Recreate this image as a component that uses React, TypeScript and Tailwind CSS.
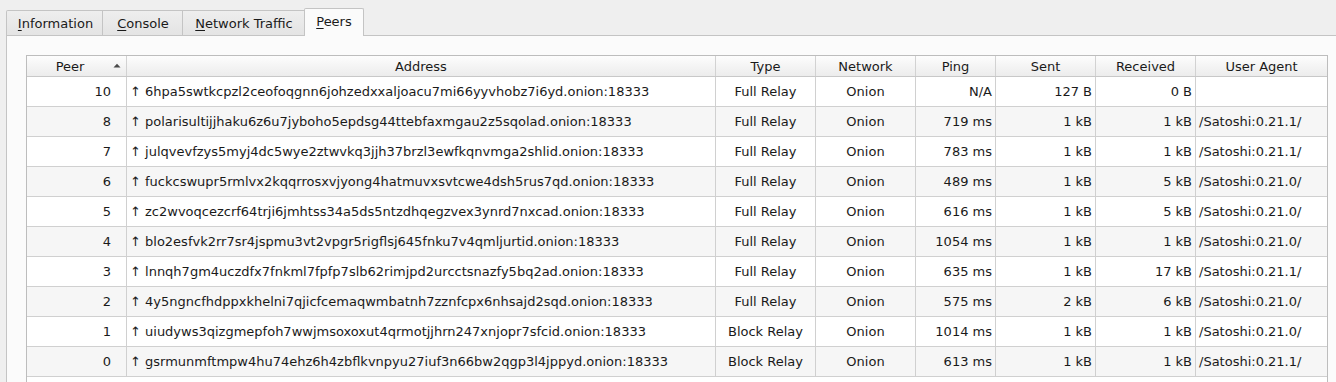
import React from "react";

type Row = {
  peer: string;
  addr: string;
  type: string;
  net: string;
  ping: string;
  sent: string;
  recv: string;
  ua: string;
};

const rows: Row[] = [
  { peer: "10", addr: "6hpa5swtkcpzl2ceofoqgnn6johzedxxaljoacu7mi66yyvhobz7i6yd.onion:18333", type: "Full Relay", net: "Onion", ping: "N/A", sent: "127 B", recv: "0 B", ua: "" },
  { peer: "8", addr: "polarisultijjhaku6z6u7jyboho5epdsg44ttebfaxmgau2z5sqolad.onion:18333", type: "Full Relay", net: "Onion", ping: "719 ms", sent: "1 kB", recv: "1 kB", ua: "/Satoshi:0.21.1/" },
  { peer: "7", addr: "julqvevfzys5myj4dc5wye2ztwvkq3jjh37brzl3ewfkqnvmga2shlid.onion:18333", type: "Full Relay", net: "Onion", ping: "783 ms", sent: "1 kB", recv: "1 kB", ua: "/Satoshi:0.21.1/" },
  { peer: "6", addr: "fuckcswupr5rmlvx2kqqrrosxvjyong4hatmuvxsvtcwe4dsh5rus7qd.onion:18333", type: "Full Relay", net: "Onion", ping: "489 ms", sent: "1 kB", recv: "5 kB", ua: "/Satoshi:0.21.0/" },
  { peer: "5", addr: "zc2wvoqcezcrf64trji6jmhtss34a5ds5ntzdhqegzvex3ynrd7nxcad.onion:18333", type: "Full Relay", net: "Onion", ping: "616 ms", sent: "1 kB", recv: "5 kB", ua: "/Satoshi:0.21.0/" },
  { peer: "4", addr: "blo2esfvk2rr7sr4jspmu3vt2vpgr5rigflsj645fnku7v4qmljurtid.onion:18333", type: "Full Relay", net: "Onion", ping: "1054 ms", sent: "1 kB", recv: "1 kB", ua: "/Satoshi:0.21.0/" },
  { peer: "3", addr: "lnnqh7gm4uczdfx7fnkml7fpfp7slb62rimjpd2urcctsnazfy5bq2ad.onion:18333", type: "Full Relay", net: "Onion", ping: "635 ms", sent: "1 kB", recv: "17 kB", ua: "/Satoshi:0.21.1/" },
  { peer: "2", addr: "4y5ngncfhdppxkhelni7qjicfcemaqwmbatnh7zznfcpx6nhsajd2sqd.onion:18333", type: "Full Relay", net: "Onion", ping: "575 ms", sent: "2 kB", recv: "6 kB", ua: "/Satoshi:0.21.0/" },
  { peer: "1", addr: "uiudyws3qizgmepfoh7wwjmsoxoxut4qrmotjjhrn247xnjopr7sfcid.onion:18333", type: "Block Relay", net: "Onion", ping: "1014 ms", sent: "1 kB", recv: "1 kB", ua: "/Satoshi:0.21.0/" },
  { peer: "0", addr: "gsrmunmftmpw4hu74ehz6h4zbflkvnpyu27iuf3n66bw2qgp3l4jppyd.onion:18333", type: "Block Relay", net: "Onion", ping: "613 ms", sent: "1 kB", recv: "1 kB", ua: "/Satoshi:0.21.1/" },
];

export default function App() {
  return (
    <div className="w-[1336px] h-[382px] overflow-hidden bg-[#efefef] text-[13px] leading-none text-[#1a1a1a] font-['DejaVu_Sans',sans-serif]">
      <div className="h-[35px] flex items-end pl-[6px]">
        <div className="w-[97px] h-[25px] flex items-center justify-center pl-[2px] border border-b-0 border-[#c4c4c4] rounded-tl-[2px] bg-gradient-to-b from-[#eeeeee] to-[#e4e4e4]">
          <span>
            <span className="underline underline-offset-[2px]">I</span>nformation
          </span>
        </div>
        <div className="w-[80px] h-[25px] flex items-center justify-center pl-[1px] border border-b-0 border-l-0 border-[#c4c4c4] bg-gradient-to-b from-[#eeeeee] to-[#e4e4e4]">
          <span>
            <span className="underline underline-offset-[2px]">C</span>onsole
          </span>
        </div>
        <div className="w-[122px] h-[25px] flex items-center justify-center pl-[1px] border border-b-0 border-l-0 border-[#c4c4c4] bg-gradient-to-b from-[#eeeeee] to-[#e4e4e4]">
          <span>
            <span className="underline underline-offset-[2px]">N</span>etwork Traffic
          </span>
        </div>
        <div className="relative z-10 -mb-px -ml-px w-[60px] h-[28px] flex items-center justify-center border border-b-0 border-[#c4c4c4] rounded-t-[2px] bg-[#fbfbfb]">
          <span className="-mt-[2px]">
            <span className="underline underline-offset-[2px]">P</span>eers
          </span>
        </div>
      </div>
      <div className="ml-[6px] h-[347px] border-l border-t border-[#c4c4c4] bg-[#fbfbfb] pt-[19px] pl-[19px]">
        <div className="w-[1302px] h-[400px] border border-[#bdbdbd] bg-white">
          <div className="flex h-[21px] border-b border-[#c8c8c8] bg-gradient-to-b from-[#fdfdfd] to-[#ececec]">
            <div className="relative w-[100px] shrink-0 flex items-center justify-center pr-[13px] border-r border-[#d2d2d2]">
              Peer
              <svg className="absolute left-[86px] top-[7px]" width="8" height="5" viewBox="0 0 8 5">
                <path d="M0.5 4.5 L4 0.8 L7.5 4.5 Z" fill="#4a4a4a" />
              </svg>
            </div>
            <div className="w-[589px] shrink-0 flex items-center justify-center border-r border-[#d2d2d2]">Address</div>
            <div className="w-[100px] shrink-0 flex items-center justify-center border-r border-[#d2d2d2]">Type</div>
            <div className="w-[100px] shrink-0 flex items-center justify-center border-r border-[#d2d2d2]">Network</div>
            <div className="w-[80px] shrink-0 flex items-center justify-center border-r border-[#d2d2d2]">Ping</div>
            <div className="w-[100px] shrink-0 flex items-center justify-center border-r border-[#d2d2d2]">Sent</div>
            <div className="w-[100px] shrink-0 flex items-center justify-center border-r border-[#d2d2d2]">Received</div>
            <div className="w-[131px] shrink-0 flex items-center justify-center">User Agent</div>
          </div>
          {rows.map((r, i) => (
            <div
              key={r.peer}
              className={`flex h-[30px] border-b border-[#d0d0d0] ${i % 2 === 1 ? "bg-[#f6f6f6]" : "bg-white"}`}
            >
              <div className="w-[100px] shrink-0 flex items-center justify-end pr-[15px] border-r border-[#d0d0d0]">{r.peer}</div>
              <div className="w-[589px] shrink-0 flex items-center pl-[3px] border-r border-[#d0d0d0] whitespace-nowrap overflow-hidden">
                ↑ {r.addr}
              </div>
              <div className="w-[100px] shrink-0 flex items-center justify-center border-r border-[#d0d0d0]">{r.type}</div>
              <div className="w-[100px] shrink-0 flex items-center justify-center border-r border-[#d0d0d0]">{r.net}</div>
              <div className="w-[80px] shrink-0 flex items-center justify-end pr-[3px] border-r border-[#d0d0d0]">{r.ping}</div>
              <div className="w-[100px] shrink-0 flex items-center justify-end pr-[3px] border-r border-[#d0d0d0]">{r.sent}</div>
              <div className="w-[100px] shrink-0 flex items-center justify-end pr-[3px] border-r border-[#d0d0d0]">{r.recv}</div>
              <div className="w-[131px] shrink-0 flex items-center pl-[3px] whitespace-nowrap">{r.ua}</div>
            </div>
          ))}
        </div>
      </div>
    </div>
  );
}
